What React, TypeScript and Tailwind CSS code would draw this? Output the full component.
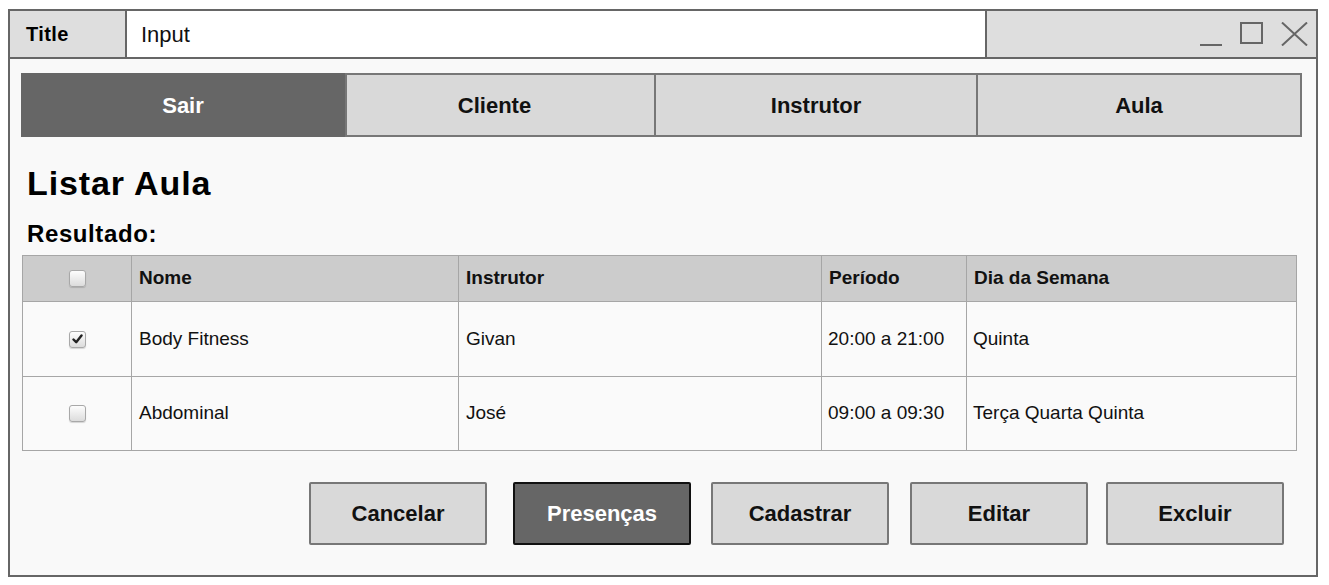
import React from "react";

const font = { fontFamily: '"Liberation Sans", Arial, Helvetica, sans-serif' };

function Checkbox({ checked }: { checked?: boolean }) {
  return (
    <div className="w-[17px] h-[17px] rounded-[3px] border border-[#a8a8a8] bg-gradient-to-b from-[#fdfdfd] to-[#dcdcdc] shadow-[0_1px_1px_rgba(0,0,0,0.15)] flex items-center justify-center mx-auto">
      {checked && (
        <svg width="11" height="10" viewBox="0 0 11 10">
          <path d="M1.5 5.5 L4.2 8.2 L9.5 1.5" fill="none" stroke="#222" strokeWidth="2.4" strokeLinecap="round" strokeLinejoin="round" />
        </svg>
      )}
    </div>
  );
}

export default function App() {
  const rows = [
    { c: true, nome: "Body Fitness", inst: "Givan", per: "20:00 a 21:00", dia: "Quinta" },
    { c: false, nome: "Abdominal", inst: "José", per: "09:00 a 09:30", dia: "Terça Quarta Quinta" },
  ];
  return (
    <div className="w-[1329px] h-[585px] bg-white pt-[9px] pl-[8px]" style={font}>
      <div className="w-[1310px] h-[568px] border-2 border-[#666] bg-[#f9f9f9] flex flex-col">
        {/* Title bar */}
        <div className="h-[48px] flex border-b-2 border-[#666] shrink-0">
          <div className="w-[117px] bg-[#dedede] border-r-2 border-[#666] flex items-center pl-[16px] text-[20px] font-bold text-black tracking-[0.4px]">
            Title
          </div>
          <div className="w-[860px] bg-white border-r-2 border-[#666] flex items-center pl-[14px] text-[22px] text-[#111]">
            Input
          </div>
          <div className="flex-1 bg-[#dedede] flex items-start justify-end pr-[8px] pt-[11px] gap-[18px]">
            <div className="w-[22px] h-[24px] flex items-end">
              <div className="w-[22px] h-[2px] bg-[#666]" />
            </div>
            <div className="w-[23px] h-[22px] border-[2.5px] border-[#666]" />
            <svg width="27" height="24" viewBox="0 0 27 24">
              <path d="M1 0.5 L26 23.5 M26 0.5 L1 23.5" stroke="#666" strokeWidth="2" fill="none" />
            </svg>
          </div>
        </div>

        {/* Body */}
        <div className="flex flex-col pl-[11px] pr-[14px] pt-[14px]">
          {/* Tabs */}
          <div className="flex h-[64px]">
            <div className="w-[324px] bg-[#666] flex items-center justify-center text-white text-[22px] font-bold">
              Sair
            </div>
            <div className="w-[311px] bg-[#d9d9d9] border-2 border-[#777] flex items-center justify-center pr-[12px] text-[22px] font-bold text-[#111]">
              Cliente
            </div>
            <div className="w-[322px] bg-[#d9d9d9] border-y-2 border-r-2 border-[#777] flex items-center justify-center text-[22px] font-bold text-[#111]">
              Instrutor
            </div>
            <div className="w-[324px] bg-[#d9d9d9] border-y-2 border-r-2 border-[#777] flex items-center justify-center text-[22px] font-bold text-[#111]">
              Aula
            </div>
          </div>

          <div className="mt-[29px] pl-[6px] text-[34px] leading-none font-bold text-black tracking-[0.9px]">Listar Aula</div>
          <div className="mt-[22px] pl-[6px] text-[24px] leading-none font-bold text-black tracking-[0.6px]">Resultado:</div>

          <table className="mt-[9px] ml-[1px] w-[1274px] table-fixed border-collapse border border-[#a6a6a6] text-[#111]">
            <colgroup>
              <col className="w-[109px]" />
              <col className="w-[327px]" />
              <col className="w-[363px]" />
              <col className="w-[145px]" />
              <col className="w-[330px]" />
            </colgroup>
            <thead>
              <tr className="h-[46px] bg-[#cccccc] text-[19px] font-bold">
                <th className="border border-[#a6a6a6]"><Checkbox /></th>
                <th className="border border-[#a6a6a6] text-left pl-[7px] font-bold">Nome</th>
                <th className="border border-[#a6a6a6] text-left pl-[7px] font-bold">Instrutor</th>
                <th className="border border-[#a6a6a6] text-left pl-[7px] font-bold">Período</th>
                <th className="border border-[#a6a6a6] text-left pl-[7px] font-bold">Dia da Semana</th>
              </tr>
            </thead>
            <tbody>
              {rows.map((r, i) => (
                <tr key={i} className={`${i === 0 ? "h-[75px]" : "h-[74px]"} bg-[#fafafa] text-[19px]`}>
                  <td className="border border-[#a6a6a6]"><Checkbox checked={r.c} /></td>
                  <td className="border border-[#a6a6a6] pl-[7px]">{r.nome}</td>
                  <td className="border border-[#a6a6a6] pl-[7px]">{r.inst}</td>
                  <td className="border border-[#a6a6a6] pl-[6px]">{r.per}</td>
                  <td className="border border-[#a6a6a6] pl-[6px]">{r.dia}</td>
                </tr>
              ))}
            </tbody>
          </table>

          <div className="flex mt-[31px] pl-[288px]">
            <button className="w-[178px] h-[63px] rounded-[2px] border-2 border-[#777] bg-[#d9d9d9] text-[22px] font-bold text-[#111]">Cancelar</button>
            <button className="ml-[26px] w-[178px] h-[63px] rounded-[2px] border-2 border-[#111] bg-[#666] text-[22px] font-bold text-white">Presenças</button>
            <button className="ml-[20px] w-[178px] h-[63px] rounded-[2px] border-2 border-[#777] bg-[#d9d9d9] text-[22px] font-bold text-[#111]">Cadastrar</button>
            <button className="ml-[21px] w-[178px] h-[63px] rounded-[2px] border-2 border-[#777] bg-[#d9d9d9] text-[22px] font-bold text-[#111]">Editar</button>
            <button className="ml-[18px] w-[178px] h-[63px] rounded-[2px] border-2 border-[#777] bg-[#d9d9d9] text-[22px] font-bold text-[#111]">Excluir</button>
          </div>
        </div>
      </div>
    </div>
  );
}
